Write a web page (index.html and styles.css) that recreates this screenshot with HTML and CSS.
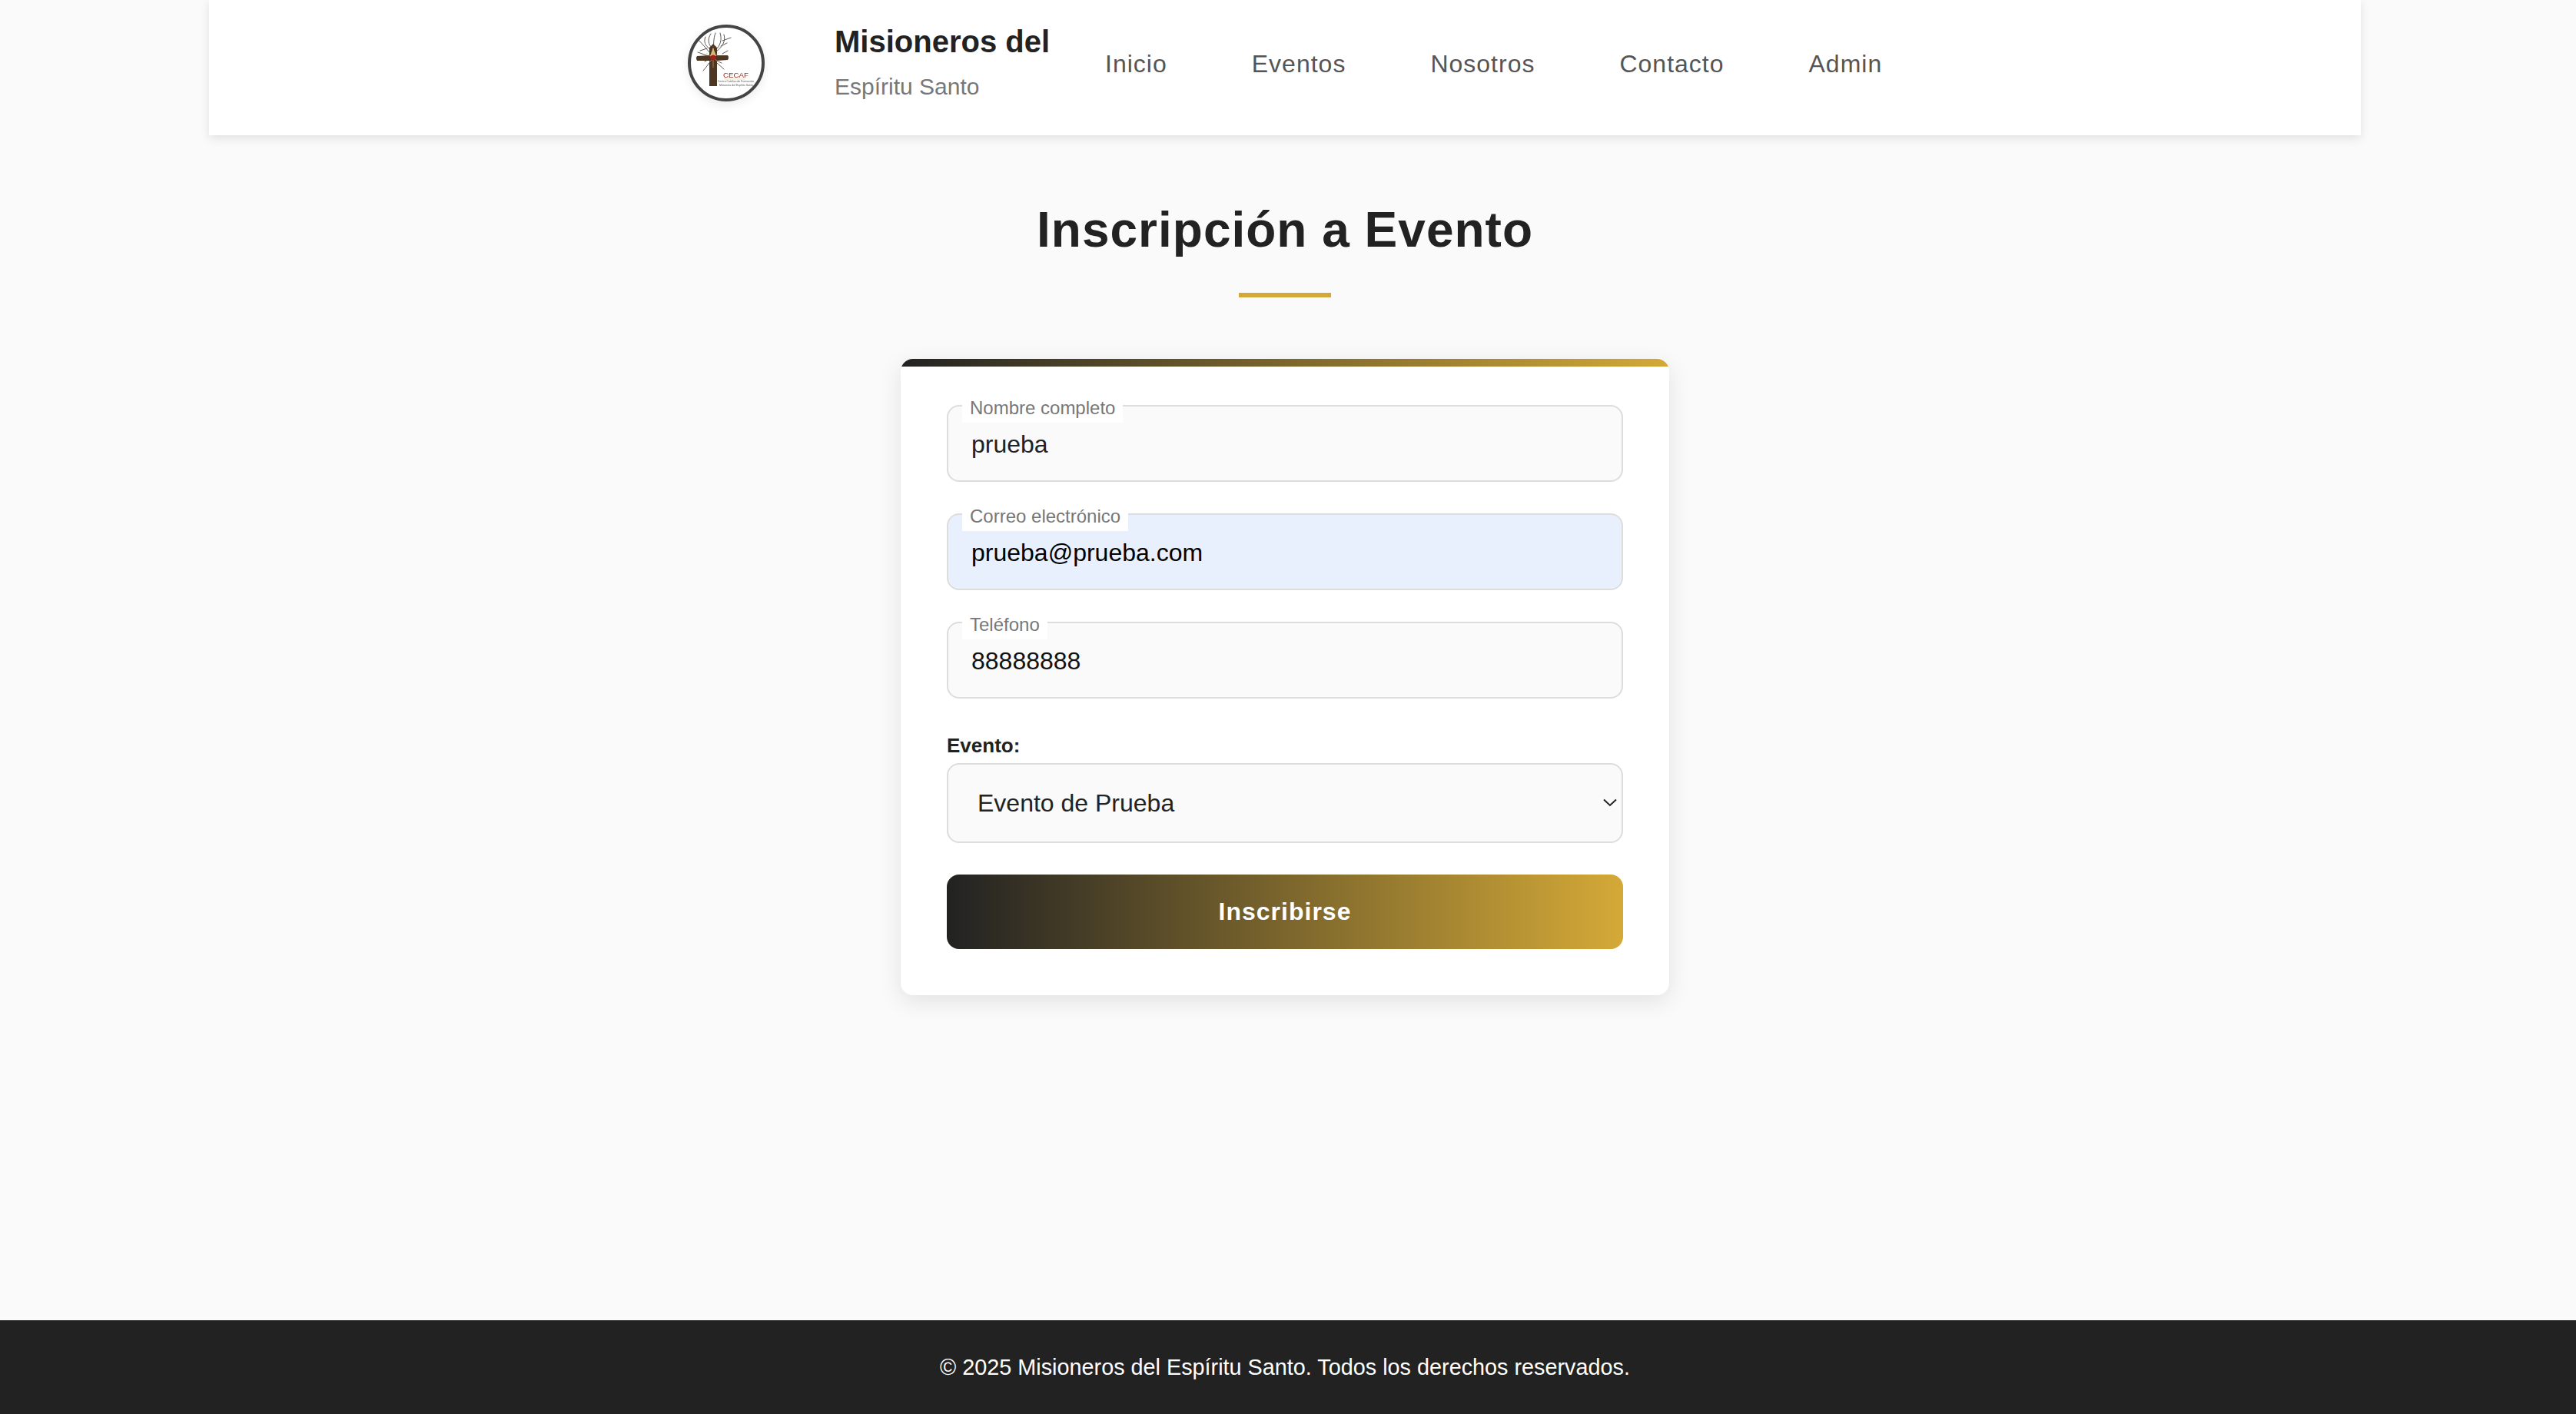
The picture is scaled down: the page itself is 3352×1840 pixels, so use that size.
FILE: index.html
```html
<!DOCTYPE html>
<html lang="es">
<head>
<meta charset="utf-8">
<title>Inscripción a Evento</title>
<link rel="stylesheet" href="styles.css">
</head>
<body>
<header class="site-header">
  <div class="header-inner">
    <a class="brand" href="#">
      <svg class="logo" viewBox="0 0 100 100" aria-label="CECAF">
        <circle cx="50" cy="50" r="48" fill="#fff" stroke="#444" stroke-width="4"/>
        <g fill="none" stroke="#4c4640" stroke-width="0.9" stroke-linecap="round">
          <path d="M14 20 L23 30 L28 36 M16 34 L25 31 M23 16 C20 22 23 28 28 31 M30 12 C25 19 27 26 31 30 M36 11 C33 18 34 26 33 34 M42 11 C45 20 42 28 36 33 M47 13 C50 22 44 30 37 35 M56 17 L45 21 M51 24 L43 28 M13 36 L27 41 M22 48 L30 44 M20 60 L29 49 M45 38 L52 34 M38 50 L47 58 M37 47 L44 50"/>
        </g>
        <path d="M28 80 L28 47 L12 47 Q10 43 12 41 L28 40 L28 30 L33 25 L38 30 L38 40 L52 40 Q54 43 52 46 L38 47 L38 80 Z" fill="#4d3622"/>
        <path d="M29 41 L33 30 L37 41 Z" fill="#d8bd72"/>
        <path d="M25 52 L41 36 M24 37 L42 50 M33 30 L33 56" stroke="#d8bd72" stroke-width="0.6"/>
        <circle cx="33" cy="43" r="3.600" fill="#a3201c"/>
        <text class="logo-name" x="46" y="69" textLength="33" lengthAdjust="spacingAndGlyphs">CECAF</text>
        <path d="M47 71 H74" stroke="#d8bd72" stroke-width="0.5"/>
        <text class="logo-small" x="39" y="75" textLength="47" lengthAdjust="spacingAndGlyphs">Centro Católico de Formación</text>
        <text class="logo-small" x="41" y="80" textLength="44" lengthAdjust="spacingAndGlyphs">Misionera del Espíritu Santo</text>
      </svg>
      <span class="brand-text">
        <span class="brand-title">Misioneros del</span>
        <span class="brand-sub">Espíritu Santo</span>
      </span>
    </a>
    <nav class="main-nav">
      <a href="#">Inicio</a>
      <a href="#">Eventos</a>
      <a href="#">Nosotros</a>
      <a href="#">Contacto</a>
      <a href="#">Admin</a>
    </nav>
  </div>
</header>
<main class="content">
  <h1 class="page-title">Inscripción a Evento</h1>
  <form class="card">
    <div class="field">
      <label class="float-label" for="nombre">Nombre completo</label>
      <input class="text-input" id="nombre" type="text" value="prueba">
    </div>
    <div class="field">
      <label class="float-label" for="correo">Correo electrónico</label>
      <input class="text-input autofilled" id="correo" type="email" value="prueba@prueba.com">
    </div>
    <div class="field">
      <label class="float-label" for="telefono">Teléfono</label>
      <input class="text-input dark" id="telefono" type="tel" value="88888888">
    </div>
    <div class="select-field">
      <label class="select-label" for="evento">Evento:</label>
      <div class="select-wrap">
        <select class="select-input" id="evento">
          <option>Evento de Prueba</option>
        </select>
        <svg class="chevron" viewBox="0 0 18 11"><path d="M1 1.500 L9 9 L17 1.500" fill="none" stroke="#222" stroke-width="2"/></svg>
      </div>
    </div>
    <button class="submit" type="button">Inscribirse</button>
  </form>
</main>
<footer class="site-footer">© 2025 Misioneros del Espíritu Santo. Todos los derechos reservados.</footer>
</body>
</html>
```
FILE: styles.css
```css
* { box-sizing: border-box; }
html, body { margin: 0; padding: 0; }
body {
  min-height: 100vh;
  display: flex;
  flex-direction: column;
  padding-right: 8px;
  background: #fafafa;
  color: #222;
  font-family: "Liberation Sans", Arial, sans-serif;
}
a { color: inherit; text-decoration: none; }

.site-header {
  width: 2800px;
  height: 176px;
  margin: 0 auto;
  background: #fff;
  box-shadow: 0 4px 12px rgba(0,0,0,.1);
  display: flex;
  justify-content: center;
}
.header-inner {
  width: 1600px;
  height: 164px;
  padding-left: 23px;
  display: flex;
  align-items: center;
}
.brand { display: flex; align-items: center; gap: 91px; }
.logo { width: 100px; height: 100px; flex: none; filter: blur(.4px) drop-shadow(0 4px 6px rgba(0,0,0,.08)); }
.logo-name { font: 400 9.500px "Liberation Sans", sans-serif; fill: #9c2a22; }
.logo-small { font: 400 3px "Liberation Sans", sans-serif; fill: #555; }
.brand-text { display: flex; flex-direction: column; gap: 19px; margin-top: -4px; }
.brand-title { font-size: 40px; line-height: 46px; font-weight: 700; color: #222; }
.brand-sub { font-size: 30px; line-height: 34px; color: #777; }
.main-nav { display: flex; gap: 110px; margin-left: 72px; padding-top: 3px; font-size: 32px; letter-spacing: 1px; color: #555; }

.content { flex: 1; display: flex; flex-direction: column; align-items: center; }
.page-title {
  position: relative;
  margin: 86px 0 0;
  font-size: 64px;
  line-height: 74px;
  font-weight: 700;
  letter-spacing: 1px;
  color: #222;
}
.page-title::after {
  content: "";
  position: absolute;
  left: 50%;
  bottom: -51px;
  width: 120px;
  height: 6px;
  margin-left: -60px;
  background: #d4a937;
}
.card {
  width: 1000px;
  margin-top: 131px;
  padding: 60px;
  background: #fff;
  border-radius: 16px;
  position: relative;
  overflow: hidden;
  box-shadow: 0 8px 30px rgba(0,0,0,.1);
}
.card::before {
  content: "";
  position: absolute;
  inset: 0 0 auto 0;
  height: 10px;
  background: linear-gradient(90deg, #222, #d4a937);
}
.field { position: relative; margin-bottom: 41px; }
.float-label {
  position: absolute;
  left: 20px;
  top: -12px;
  height: 35px;
  padding: 0 10px;
  background: #fff;
  font-size: 24px;
  line-height: 32px;
  color: #777;
}
.text-input {
  display: block;
  width: 100%;
  height: 100px;
  padding: 2px 30px 0;
  border: 2px solid #ddd;
  border-radius: 16px;
  background: #fafafa;
  color: #222;
  font: 32px "Liberation Sans", Arial, sans-serif;
  outline: none;
}
.autofilled { background: #e8f0fe; color: #000; }
.dark { color: #111; }
.select-field { margin-bottom: 41px; padding-top: 3px; }
.select-label {
  display: block;
  margin: 0 0 6px;
  font-size: 26px;
  line-height: 34px;
  font-weight: 700;
  color: #222;
}
.select-wrap { position: relative; }
.select-input {
  display: block;
  width: 100%;
  height: 104px;
  padding: 0 38px;
  border: 2px solid #ddd;
  border-radius: 16px;
  background: #fafafa;
  color: #222;
  font: 32px "Liberation Sans", Arial, sans-serif;
  appearance: none;
  outline: none;
}
.chevron { position: absolute; right: 8px; top: 46px; width: 18px; height: 11px; }
.submit {
  display: block;
  width: 100%;
  height: 97px;
  border: 0;
  border-radius: 16px;
  background: linear-gradient(90deg, #222, #d4a937);
  color: #fff;
  font: 700 32px "Liberation Sans", Arial, sans-serif;
  letter-spacing: 1px;
}
.site-footer {
  height: 122px;
  margin-right: -8px;
  padding-right: 8px;
  background: #222;
  color: #fff;
  display: flex;
  align-items: center;
  justify-content: center;
  font-size: 28.800px;
  flex: none;
}
```
